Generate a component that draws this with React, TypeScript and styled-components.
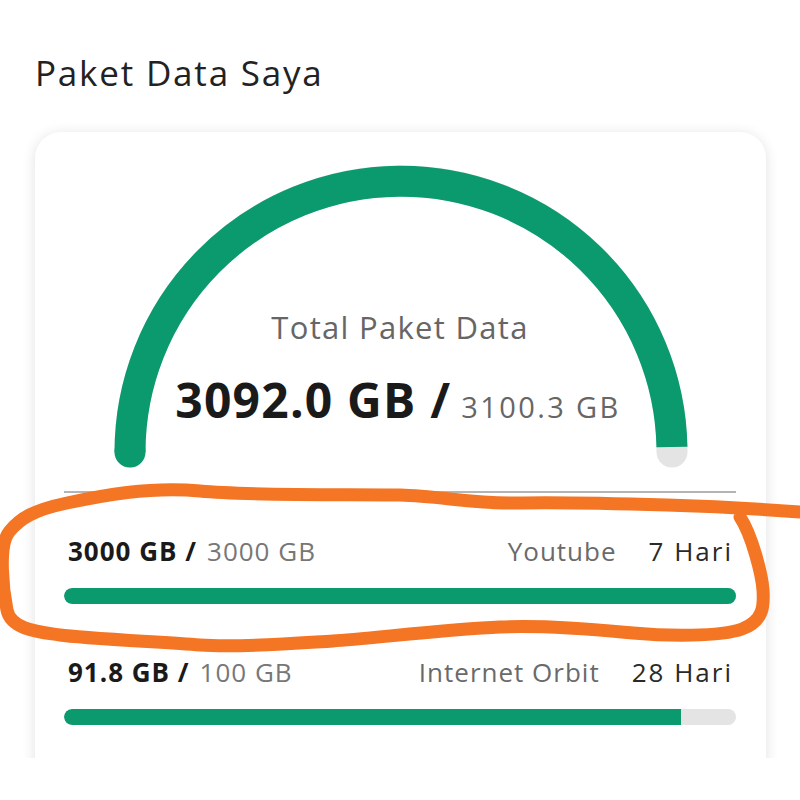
import React from 'react';
import styled, { createGlobalStyle } from 'styled-components';

const GlobalStyle = createGlobalStyle`
  html, body {
    margin: 0;
    padding: 0;
    background: #ffffff;
    font-family: 'Open Sans', 'Noto Sans', sans-serif;
    color: #1c1c1c;
  }
`;

const GREEN = '#0a9a6d';
const TRACK = '#e4e4e4';

type Pack = { used: string; total: string; name: string; days: string; percent: number };

const packs: Pack[] = [
  { used: '3000 GB', total: '3000 GB', name: 'Youtube', days: '7 Hari', percent: 100 },
  { used: '91.8 GB', total: '100 GB', name: 'Internet Orbit', days: '28 Hari', percent: 91.8 },
];

const Screen = styled.div`
  position: relative;
  height: 758px;
  overflow: hidden;
  padding: 0 34px 0 35px;
`;

const Title = styled.h1`
  margin: 0;
  padding-top: 50px;
  font-size: 35px;
  font-weight: 400;
  line-height: 46px;
  letter-spacing: 1.8px;
  color: #222;
`;

const Card = styled.section`
  margin-top: 36px;
  background: #fff;
  border-radius: 26px;
  box-shadow: 0 2px 14px rgba(0, 0, 0, 0.12);
  padding: 18px 30px 60px 29px;
`;

const GaugeWrap = styled.div`
  position: relative;
  height: 330px;
`;

const GaugeSvg = styled.svg`
  position: absolute;
  left: 0;
  top: 0;
`;

const GaugeText = styled.div`
  position: relative;
  padding-top: 156px;
  text-align: center;
`;

const GaugeLabel = styled.div`
  font-size: 31px;
  line-height: 42px;
  letter-spacing: 1.3px;
  color: #666;
`;

const GaugeValue = styled.div`
  margin-top: 22px;
  font-size: 48px;
  line-height: 60px;
  font-weight: 700;
  letter-spacing: 1.2px;
  color: #1a1a1a;
  padding-right: 4px;
`;

const GaugeTotal = styled.span`
  font-size: 29px;
  font-weight: 400;
  letter-spacing: 2.4px;
  color: #666;
  margin-left: 10px;
`;

const Divider = styled.hr`
  margin: 11px 0 0;
  border: none;
  height: 2px;
  background: #b4b4b4;
`;

const PackList = styled.div`
  display: flex;
  flex-direction: column;
  gap: 52px;
  padding-top: 42px;
`;

const PackRow = styled.div`
  display: flex;
  flex-direction: column;
  gap: 21px;
`;

const PackHead = styled.div`
  display: flex;
  align-items: center;
  height: 32px;
  padding: 0 3px 0 4px;
  font-size: 26px;
  letter-spacing: 1px;
`;

const Used = styled.span`
  font-weight: 700;
  color: #1a1a1a;
`;

const Total = styled.span`
  color: #777;
  margin-left: 10px;
`;

const Name = styled.span`
  margin-left: auto;
  color: #6a6a6a;
`;

const Days = styled.span`
  margin-left: 32px;
  color: #2a2a2a;
  letter-spacing: 2px;
`;

const Bar = styled.div`
  height: 16px;
  border-radius: 8px;
  background: ${TRACK};
  overflow: hidden;
`;

const BarFill = styled.div`
  height: 100%;
  background: ${GREEN};
  border-radius: 8px 0 0 8px;
`;

const Scribble = styled.svg`
  position: absolute;
  left: 0;
  top: 0;
  pointer-events: none;
`;

const scribblePath =
  'M 800 512 C 760 509, 700 506, 667 505 S 560 502, 517 503 S 440 496, 400 495 S 250 496, 200 491 ' +
  'S 100 496, 67 503 S 20 518, 9 532 S 3 590, 7 610 S 40 632, 60 635 S 160 642, 200 645 ' +
  'S 300 643, 333 641 S 450 629, 500 627 S 600 630, 633 633 S 720 637, 742 629 ' +
  'S 764 605, 763 590 S 752 535, 740 517';

export default function App() {
  return (
    <>
      <GlobalStyle />
      <Screen>
        <Title>Paket Data Saya</Title>
        <Card>
          <GaugeWrap>
            <GaugeSvg width="672" height="330" viewBox="0 0 672 330">
              <path d="M 66 302 A 271 271 0 0 1 608 302" fill="none" stroke={TRACK} strokeWidth="31" strokeLinecap="round" />
              <path d="M 66 302 A 271 271 0 0 1 607.95 297" fill="none" stroke={GREEN} strokeWidth="31" strokeLinecap="butt" />
              <circle cx="66" cy="302" r="15.5" fill={GREEN} />
            </GaugeSvg>
            <GaugeText>
              <GaugeLabel>Total Paket Data</GaugeLabel>
              <GaugeValue>
                3092.0 GB /<GaugeTotal>3100.3 GB</GaugeTotal>
              </GaugeValue>
            </GaugeText>
          </GaugeWrap>
          <Divider />
          <PackList>
            {packs.map((p) => (
              <PackRow key={p.name}>
                <PackHead>
                  <Used>{p.used} /</Used>
                  <Total>{p.total}</Total>
                  <Name>{p.name}</Name>
                  <Days>{p.days}</Days>
                </PackHead>
                <Bar>
                  <BarFill style={{ width: `${p.percent}%` }} />
                </Bar>
              </PackRow>
            ))}
          </PackList>
        </Card>
        <Scribble width="800" height="758" viewBox="0 0 800 758">
          <path d={scribblePath} fill="none" stroke="#f47524" strokeWidth="13" strokeLinecap="round" strokeLinejoin="round" />
        </Scribble>
      </Screen>
    </>
  );
}
